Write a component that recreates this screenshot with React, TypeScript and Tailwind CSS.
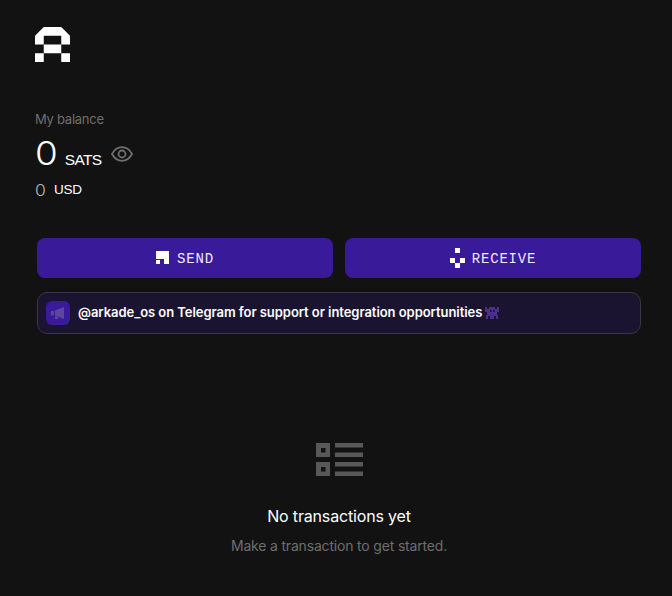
import React from 'react';

const Logo = () => (
  <svg width="35" height="35" viewBox="0 0 35 35" fill="#fff">
    <path d="M8.75 0H26.25L35 8.75V17.5H26.25V8.75H8.75V17.5H0V8.75Z" />
    <rect x="8.75" y="17.5" width="17.5" height="8.75" />
    <rect x="0" y="26.25" width="8.75" height="8.75" />
    <rect x="26.25" y="26.25" width="8.75" height="8.75" />
  </svg>
);

const SendIcon = () => (
  <svg width="13" height="14" viewBox="0 0 13 14" fill="#fff">
    <path d="M0 0H13V13H8V8H0Z" />
    <rect x="0" y="9" width="4" height="4" />
  </svg>
);

const ReceiveIcon = () => (
  <svg width="15" height="20" viewBox="0 0 15 20" fill="#fff">
    <rect x="5" y="0" width="5" height="5" />
    <rect x="0" y="10" width="5" height="5" />
    <rect x="10" y="10" width="5" height="5" />
    <rect x="5" y="15" width="5" height="5" />
  </svg>
);

const EmptyIcon = () => (
  <svg width="48" height="34" viewBox="0 0 48 34" fill="#585858">
    <path fillRule="evenodd" d="M0 0H14V14H0ZM5 5V9.500H9.500V5Z" />
    <path fillRule="evenodd" d="M0 19H14V33H0ZM5 24V28.500H9.500V24Z" />
    <rect x="19" y="0" width="28" height="4.500" />
    <rect x="19" y="9.500" width="28" height="4.500" />
    <rect x="19" y="19" width="28" height="4.500" />
    <rect x="19" y="28.500" width="28" height="4.500" />
  </svg>
);

const Megaphone = () => (
  <svg width="14" height="14" viewBox="0 0 14 14" fill="#5f45a0">
    <path d="M0 5H3V9.500H0Z" />
    <path d="M4 4.500L13 1V13L4 9.500Z" />
    <path d="M4 10.500H7V13H4Z" />
  </svg>
);

const Invader = () => (
  <svg width="14" height="14" viewBox="0 0 14 14" fill="#4b2f8c">
    <path d="M4 1H10V3H12V1H14V6H12V9H13V13H11V10H9V13H5V10H3V13H1V9H2V6H0V1H2V3H4Z" />
    <rect x="5" y="4" width="1.500" height="2" fill="#1a1430" />
    <rect x="8" y="4" width="1.500" height="2" fill="#1a1430" />
  </svg>
);

const Eye = () => (
  <svg width="22" height="16" viewBox="0 0 22 16" fill="none" stroke="#6f6f6f" strokeWidth="1.800">
    <path d="M1 8C3.500 3.400 6.800 1.200 11 1.200C15.200 1.200 18.500 3.400 21 8C18.500 12.600 15.200 14.800 11 14.800C6.800 14.800 3.500 12.600 1 8Z" />
    <circle cx="11" cy="8" r="3.500" />
  </svg>
);

export default function App() {
  return (
    <div className="h-[596px] w-[672px] overflow-hidden bg-[#121212] font-['Inter',sans-serif] text-white">
      <div className="px-[35px] pt-[27px]">
        <Logo />
      </div>

      <div className="mt-[49px] px-[35px]">
        <p className="text-[13px] leading-4 tracking-[-0.25px] text-[#6e6e6e]">My balance</p>
        <div className="mt-[8px] flex h-[38px] items-end">
          <span className="origin-left scale-x-[1.15] text-[32px] font-light leading-[38px]">0</span>
          <span className="mb-[3px] ml-[10px] font-['Liberation_Sans',sans-serif] text-[15.5px] leading-5 tracking-[-0.7px]">SATS</span>
          <span className="mb-[11px] ml-[10px] flex">
            <Eye />
          </span>
        </div>
        <div className="mt-[7px] flex h-5 items-center">
          <span className="origin-left scale-x-[1.1] text-[16px] font-light text-[#b8b8b8]">0</span>
          <span className="ml-[9px] font-['Liberation_Sans',sans-serif] text-[13.5px] tracking-[-0.2px]">USD</span>
        </div>
      </div>

      <div className="ml-[37px] mr-[31px] mt-[38px] grid grid-cols-2 gap-3">
        <button className="flex h-10 items-center justify-center gap-2 rounded-lg bg-[#391a99] font-['Liberation_Mono',monospace] text-[14px] tracking-[0.8px] text-[#f0ecff]">
          <SendIcon />
          <span className="translate-y-px">SEND</span>
        </button>
        <button className="flex h-10 items-center justify-center gap-[7px] rounded-lg bg-[#391a99] font-['Liberation_Mono',monospace] text-[14px] tracking-[0.8px] text-[#f0ecff]">
          <ReceiveIcon />
          <span className="translate-y-px">RECEIVE</span>
        </button>
      </div>

      <div className="ml-[37px] mr-[31px] mt-[14px] flex h-[42px] items-center gap-[3px] rounded-[10px] border border-[#3a3548] bg-[#1a1430] px-2">
        <div className="mr-[5px] flex h-6 w-6 items-center justify-center rounded-md bg-[#391a99]">
          <Megaphone />
        </div>
        <p className="text-[13px] font-semibold tracking-[-0.05px]">@arkade_os on Telegram for support or integration opportunities</p>
        <Invader />
      </div>

      <div className="ml-[37px] mr-[31px] mt-[109px] flex flex-col items-center">
        <div className="ml-[2px] flex">
          <EmptyIcon />
        </div>
        <p className="mt-[27px] text-[16px] leading-6 tracking-[-0.16px]">No transactions yet</p>
        <p className="mt-[8px] text-[14px] leading-5 tracking-[-0.18px] text-[#6e6e6e]">Make a transaction to get started.</p>
      </div>
    </div>
  );
}
